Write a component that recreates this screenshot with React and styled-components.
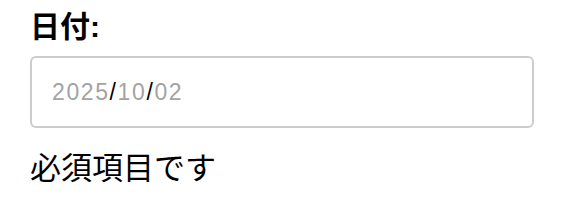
import React from "react";
import styled, { createGlobalStyle } from "styled-components";

const Global = createGlobalStyle`
  html, body { margin: 0; padding: 0; background: #fff; }
  body { font-family: "Liberation Sans", "Noto Sans CJK JP", sans-serif; color: #000; }
`;

const Field = styled.div`
  display: flex;
  flex-direction: column;
  padding: 8px 30px 0 30px;
  width: 504px;
`;

const Label = styled.label`
  font-size: 30px;
  font-weight: 700;
  line-height: 38px;
  font-family: "Liberation Sans", "Noto Sans CJK JP", sans-serif;
`;

const DateBox = styled.div`
  margin-top: 10px;
  box-sizing: border-box;
  height: 72px;
  border: 2px solid #cccccc;
  border-radius: 6px;
  display: flex;
  align-items: center;
  padding-left: 20px;
  font-size: 23px;
  letter-spacing: 1.6px;
  font-family: "Liberation Sans", sans-serif;
`;

const Segment = styled.span`
  color: ${(p) => (p.$sep ? "#000" : "#a3a3a3")};
`;

const Message = styled.div`
  margin-top: 18px;
  font-size: 31px;
  line-height: 40px;
  font-family: "Noto Sans CJK JP", sans-serif;
`;

export default function App() {
  return (
    <>
      <Global />
      <Field>
        <Label>日付:</Label>
        <DateBox>
          <Segment>2025</Segment>
          <Segment $sep>/</Segment>
          <Segment>10</Segment>
          <Segment $sep>/</Segment>
          <Segment>02</Segment>
        </DateBox>
        <Message>必須項目です</Message>
      </Field>
    </>
  );
}
